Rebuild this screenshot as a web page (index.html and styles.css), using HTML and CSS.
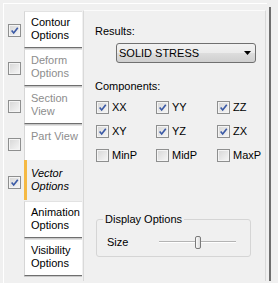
FILE: index.html
```html
<!DOCTYPE html>
<html lang="en">
<head>
  <meta charset="UTF-8" />
  <title>Vector Options</title>
  <link rel="stylesheet" href="styles.css">
</head>
<body>
  <div class="frame">
    <div class="window">
      <div class="sheet">

        <ul class="tabs">
          <li class="tab-row">
            <span class="cb"><svg viewBox="0 0 11 11"><path d="M2 5.5 L4.5 8.5 L9.5 2" /></svg></span>
            <div class="tab">Contour<br>Options</div>
          </li>
          <li class="tab-row">
            <span class="cb"></span>
            <div class="tab off">Deform<br>Options</div>
          </li>
          <li class="tab-row">
            <span class="cb"></span>
            <div class="tab off">Section<br>View</div>
          </li>
          <li class="tab-row">
            <span class="cb"></span>
            <div class="tab off">Part View<br>&nbsp;</div>
          </li>
          <li class="tab-row">
            <span class="cb"><svg viewBox="0 0 11 11"><path d="M2 5.5 L4.5 8.5 L9.5 2" /></svg></span>
            <div class="tab active">Vector<br>Options</div>
          </li>
          <li class="tab-row">
            <span class="cb-space"></span>
            <div class="tab">Animation<br>Options</div>
          </li>
          <li class="tab-row">
            <span class="cb-space"></span>
            <div class="tab">Visibility<br>Options</div>
          </li>
        </ul>

        <div class="panel">
          <div class="label">Results:</div>
          <div class="dropdown">
            <span>SOLID STRESS</span>
            <svg class="arrow" viewBox="0 0 7 4"><path d="M0 0 H7 L3.5 4 Z" /></svg>
          </div>

          <div class="label comp-label">Components:</div>
          <div class="comp-grid">
            <label class="comp"><span class="cb"><svg viewBox="0 0 11 11"><path d="M2 5.5 L4.5 8.5 L9.5 2" /></svg></span>XX</label>
            <label class="comp"><span class="cb"><svg viewBox="0 0 11 11"><path d="M2 5.5 L4.5 8.5 L9.5 2" /></svg></span>YY</label>
            <label class="comp"><span class="cb"><svg viewBox="0 0 11 11"><path d="M2 5.5 L4.5 8.5 L9.5 2" /></svg></span>ZZ</label>
            <label class="comp"><span class="cb"><svg viewBox="0 0 11 11"><path d="M2 5.5 L4.5 8.5 L9.5 2" /></svg></span>XY</label>
            <label class="comp"><span class="cb"><svg viewBox="0 0 11 11"><path d="M2 5.5 L4.5 8.5 L9.5 2" /></svg></span>YZ</label>
            <label class="comp"><span class="cb"><svg viewBox="0 0 11 11"><path d="M2 5.5 L4.5 8.5 L9.5 2" /></svg></span>ZX</label>
            <label class="comp"><span class="cb"></span>MinP</label>
            <label class="comp"><span class="cb"></span>MidP</label>
            <label class="comp"><span class="cb"></span>MaxP</label>
          </div>

          <div class="group">
            <span class="legend">Display Options</span>
            <div class="group-row">
              <span class="size-label">Size</span>
              <div class="slider"><span class="thumb"></span></div>
            </div>
          </div>
        </div>

      </div>
    </div>
    <div class="edge"></div>
  </div>
</body>
</html>
```

FILE: styles.css
```css
body { margin: 0; background: #f0f0f0; font-family: "Liberation Sans", Arial, sans-serif; font-size: 11px; line-height: 13px; color: #000; }

.frame { display: flex; width: 278px; height: 283px; overflow: hidden; }

.window {
  margin: 3px 0 0 3px; width: 264px; height: 280px; box-sizing: border-box;
  border-top: 1px solid #fff; border-left: 1px solid #fff;
}

.edge { width: 2px; height: 274px; margin: 7px 0 0 2px; background: #6e6e6e; }

.sheet { display: flex; }

/* tab column */
.tabs { list-style: none; margin: 7px 0 0 0; padding: 0; width: 79px; }

.tab-row { display: flex; align-items: center; height: 38px; }

.tab {
  width: 58px; height: 37px; box-sizing: border-box; margin: 0 0 1px 3px;
  padding: 4px 0 0 6px; background: #fff;
  border-top: 1px solid #e2e2e2; border-left: 1px solid #d6d6d6;
  border-bottom: 1px solid #6f6f6f; box-shadow: 0 1px 0 #c9c9c9;
}

.tab.off { color: #8d8d8d; }

.tab.active {
  background: #f0f0f0; font-style: italic; width: 60px;
  height: 40px; margin-top: -3px; padding-top: 7px;
  border: none; border-left: 3px solid #f5b943; box-shadow: none;
  padding-left: 4px;
}

.cb-space { width: 13px; margin-left: 4px; }

.cb {
  display: inline-flex; align-items: center; justify-content: center;
  width: 13px; height: 13px; box-sizing: border-box; flex: none;
  border: 1px solid #8e8f8f; background: linear-gradient(135deg, #d6d6d6, #f7f7f7);
  box-shadow: inset 0 0 0 1px #f4f4f4;
}

.tab-row .cb { margin-left: 4px; }

.cb svg { width: 9px; height: 9px; fill: none; stroke: #3b5aa6; stroke-width: 2; }

/* right panel */
.panel {
  width: 183px; height: 271px; margin-top: 6px; box-sizing: border-box;
  border-top: 1px solid #fbfbfb; border-left: 1px solid #d9d9d9; border-right: 1px solid #d9d9d9;
  padding: 14px 0 0 11px;
}

.dropdown {
  display: flex; align-items: center; justify-content: space-between;
  width: 140px; height: 20px; box-sizing: border-box; margin: 5px 0 0 21px;
  padding: 0 4px 0 2px; border: 1px solid #707070; border-radius: 3px;
  background: linear-gradient(#f2f2f2, #ebebeb 50%, #dddddd 51%, #cfcfcf);
}

.arrow { width: 7px; height: 4px; fill: #000; }

.comp-label { margin-top: 17px; }

.comp-grid { display: grid; grid-template-columns: 60px 61px 60px; margin: 2px 0 0 1px; }

.comp { display: flex; align-items: center; height: 24px; gap: 3px; }

/* display options box */
.group {
  margin: 52px 0 0 1px; width: 155px; height: 38px; box-sizing: border-box;
  border: 1px solid #d5d5d5; border-radius: 3px; padding: 0 0 0 10px;
}

.legend { display: inline-block; margin: -7px 0 0 -4px; padding: 0 2px; background: #f0f0f0; vertical-align: top; }

.group-row { display: flex; align-items: center; height: 14px; margin-top: 2px; }

.size-label { width: 52px; }

.slider {
  display: flex; align-items: center; width: 77px; height: 14px;
  background: linear-gradient(transparent 6px, #b4b4b4 6px, #b4b4b4 7px, #ffffff 7px, #ffffff 8px, transparent 8px);
}

.thumb {
  width: 6px; height: 13px; margin-left: 36px; box-sizing: border-box;
  border: 1px solid #7a7a7a; border-radius: 2px; background: linear-gradient(90deg, #fafafa, #dcdcdc);
}
```
